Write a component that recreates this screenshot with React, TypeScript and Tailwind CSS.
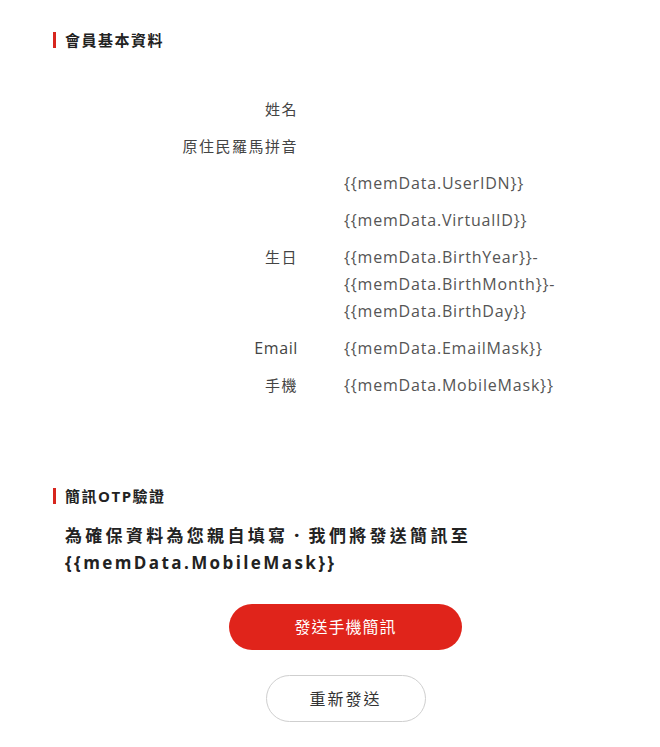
const rows: { label: string; value: string[] }[] = [
  { label: "姓名", value: [] },
  { label: "原住民羅馬拼音", value: [] },
  { label: "", value: ["{{memData.UserIDN}}"] },
  { label: "", value: ["{{memData.VirtualID}}"] },
  { label: "生日", value: ["{{memData.BirthYear}}-", "{{memData.BirthMonth}}-", "{{memData.BirthDay}}"] },
  { label: "Email", value: ["{{memData.EmailMask}}"] },
  { label: "手機", value: ["{{memData.MobileMask}}"] },
];

function SectionTitle({ children }: { children: React.ReactNode }) {
  return (
    <h2 className="flex items-center gap-[9px] text-[15px] font-bold leading-[20px] tracking-[1.5px] text-[#222]">
      <span className="h-[16px] w-[3px] bg-[#d7261e]" />
      {children}
    </h2>
  );
}

export default function App() {
  return (
    <div
      lang="zh-TW"
      className="min-h-[747px] bg-white pl-[31px] pt-[30px]"
      style={{ fontFamily: '"Open Sans", "Noto Sans CJK TC", sans-serif' }}
    >
      <div className="pl-[22px]">
        <SectionTitle>會員基本資料</SectionTitle>
      </div>

      <div className="mt-[41px] flex flex-col">
        {rows.map((row, i) => (
          <div key={i} className="grid grid-cols-[267px_1fr] gap-x-[46px] py-[5px]">
            <div
              className={
                "text-right leading-[27px] text-[#444] " +
                (row.label === "Email" ? "text-[16px] tracking-[0.6px]" : "text-[15px] tracking-[1.5px]")
              }
            >
              {row.label || "\u00a0"}
            </div>
            <div className="text-[16px] leading-[27px] tracking-[0.8px] text-[#555]">
              {row.value.length
                ? row.value.map((v) => <div key={v}>{v}</div>)
                : "\u00a0"}
            </div>
          </div>
        ))}
      </div>

      <div className="mt-[82px] pl-[22px]">
        <SectionTitle>簡訊OTP驗證</SectionTitle>
        <p className="mt-[16px] pl-[12px] text-[17px] font-bold leading-[27px] text-[#222]">
          <span className="tracking-[3.3px]">為確保資料為您親自填寫．我們將發送簡訊至</span>
          <br />
          <span className="tracking-[2.4px]">{"{{memData.MobileMask}}"}</span>
        </p>
      </div>

      <div className="mt-[28px] flex flex-col items-center gap-[25px]">
        <button className="h-[46px] w-[233px] rounded-full bg-[#e0241b] text-[16px] tracking-[1px] text-white">
          發送手機簡訊
        </button>
        <button className="h-[47px] w-[160px] rounded-full border border-[#cfcfcf] bg-white text-[16px] tracking-[2px] text-[#333]">
          重新發送
        </button>
      </div>
    </div>
  );
}
